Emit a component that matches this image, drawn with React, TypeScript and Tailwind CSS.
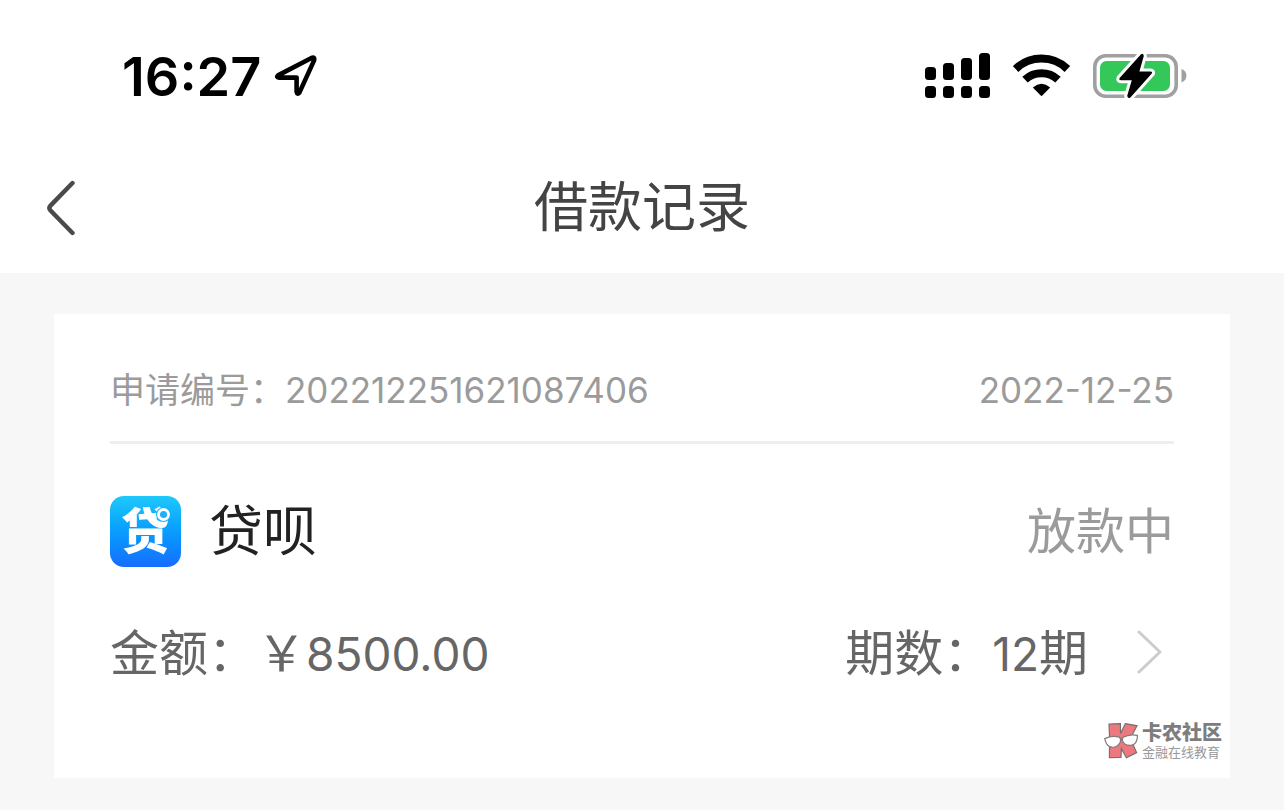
import React from "react";

function LocationArrow() {
  return (
    <svg className="h-11 w-11" viewBox="0 0 44 44" fill="none" aria-hidden="true">
      <path
        d="M5 21.4 38 4.2Q42.2 2.4 41 6.6L26.4 38.6Q24.2 41 23.6 37.8V23.6H6.2Q3 23.2 5 21.4Z"
        stroke="#000"
        strokeWidth="4.6"
        strokeLinejoin="round"
      />
    </svg>
  );
}

function SignalBars() {
  return (
    <svg className="h-[46px] w-[66px]" viewBox="0 0 66 46" aria-hidden="true">
      <rect x="0" y="14" width="11" height="13" rx="3.5" />
      <rect x="18" y="10" width="11" height="17" rx="3.5" />
      <rect x="36" y="5" width="11" height="22" rx="3.5" />
      <rect x="54" y="0" width="11" height="27" rx="3.5" />
      <rect x="0" y="33" width="11" height="12" rx="3.5" />
      <rect x="18" y="33" width="11" height="12" rx="3.5" />
      <rect x="36" y="33" width="11" height="12" rx="3.5" />
      <rect x="54" y="33" width="11" height="12" rx="3.5" />
    </svg>
  );
}

function Wifi() {
  return (
    <svg className="h-11 w-[58px]" viewBox="0 0 58 44" fill="none" aria-hidden="true">
      <path d="M2.6 15A37.5 37.5 0 0 1 54.4 15" stroke="#000" strokeWidth="8" />
      <path d="M12 25.6A24.5 24.5 0 0 1 45 25.6" stroke="#000" strokeWidth="8" />
      <path d="M19.8 33.4Q28.5 26 37.2 33.4L29.3 41.6Q28.5 42.2 27.7 41.6Z" fill="#000" />
    </svg>
  );
}

function Battery() {
  return (
    <svg className="h-[46px] w-24" viewBox="0 0 96 46" fill="none" aria-hidden="true">
      <rect x="1.8" y="2.8" width="81.4" height="40.4" rx="11" stroke="#a0a0a0" strokeWidth="3.6" />
      <rect x="7" y="8" width="70" height="30" rx="6.5" fill="#34c759" />
      <path d="M88.5 16Q93.4 17.5 93.4 22.5T88.5 29.5Z" fill="#a0a0a0" />
      <path
        d="M48 1.2 26.6 25Q25.6 27.2 28 27.2H38.8L34.2 42.8Q34.6 46 37.4 44.4L58.8 20.6Q59.8 18.6 57.4 18.6H46.4L50.8 3Q50.4 0 48 1.2Z"
        fill="#000"
        stroke="#fff"
        strokeWidth="6"
        paintOrder="stroke"
      />
    </svg>
  );
}

function StatusBar() {
  return (
    <div className="flex h-36 items-center justify-between pt-2 pr-[95px] pl-[122px]">
      <div className="flex items-center gap-3">
        <span className="pt-0.5 text-[54px] leading-[64px] font-semibold text-black">16:27</span>
        <LocationArrow />
      </div>
      <div className="flex items-center gap-[22px]">
        <SignalBars />
        <Wifi />
        <Battery />
      </div>
    </div>
  );
}

function NavBar() {
  return (
    <header className="grid h-[129px] grid-cols-[1fr_auto_1fr] items-center px-11 pb-0.5">
      <button type="button" aria-label="返回" className="w-8">
        <svg className="h-14 w-8" viewBox="0 0 32 56" fill="none">
          <path
            d="M28.5 3 6.5 25.6Q4.2 28 6.5 30.4L28.5 53"
            stroke="#4a4a4a"
            strokeWidth="4.4"
            strokeLinecap="round"
            strokeLinejoin="round"
          />
        </svg>
      </button>
      <h1 className="text-[54px] leading-[64px] text-[#444]">借款记录</h1>
    </header>
  );
}

function LenderLogo() {
  return (
    <div className="relative flex size-[71px] items-center justify-center rounded-[14px] bg-linear-to-b from-[#20c8fa] to-[#186cff]">
      <span className="text-[49px] leading-[71px] font-black text-white">贷</span>
      <svg className="absolute top-2 right-2 size-5" viewBox="0 0 20 20" fill="none" aria-hidden="true">
        <circle cx="10.5" cy="10.5" r="7.5" fill="#1eb0fb" />
        <circle cx="10.5" cy="10.5" r="5" stroke="#fff" strokeWidth="2.8" />
      </svg>
    </div>
  );
}

function CommunityMark() {
  return (
    <div className="absolute right-2 bottom-[18px] flex items-center gap-1">
      <svg className="h-9 w-[34px]" viewBox="0 0 34 36" aria-hidden="true">
        <path
          d="M5 1 16.4.6 16.6 10.6 21.4.6 33 2.8 26.4 15.6 32.6 29.6 22.4 34.8 17.4 25.6 17 34.4 5.4 34.6 5.6 15Z"
          fill="#ec7880"
          stroke="#77706f"
          strokeWidth="1.2"
        />
        <path
          d="M.8 15.6Q8 12.2 15.4 14.2 17.4 16 16.2 19.2 13.4 24.6 8 24.2 2 23.6.8 15.6Z"
          fill="#fff"
          stroke="#807b7a"
          strokeWidth="1.2"
        />
        <path
          d="M18.6 14.6Q25.6 10.6 33.4 12.4 33.6 21 27 22.4 20.2 23 18.4 17.4Z"
          fill="#fff"
          stroke="#807b7a"
          strokeWidth="1.2"
        />
        <path d="M16.4 17Q17.4 15.4 18.6 16.6" fill="none" stroke="#807b7a" strokeWidth="1.2" />
      </svg>
      <div className="flex flex-col">
        <span className="text-[20px] leading-[22px] font-black text-[#7d7d7d]">卡农社区</span>
        <span className="text-[13px] leading-4 text-[#999]">金融在线教育</span>
      </div>
    </div>
  );
}

function LoanCard() {
  return (
    <article className="relative bg-white px-14 pt-[34px] pb-[90px]">
      <div className="flex items-center justify-between border-b-3 border-[#eee] pt-4 pb-[25px] text-[35px] leading-[52px] text-[#9b9b9b]">
        <p>申请编号：202212251621087406</p>
        <time dateTime="2022-12-25">2022-12-25</time>
      </div>
      <div className="flex items-center justify-between pt-[52px]">
        <div className="flex items-center gap-7">
          <LenderLogo />
          <h2 className="text-[54px] leading-[71px] text-[#222]">贷呗</h2>
        </div>
        <p className="text-[49px] leading-[71px] text-[#9b9b9b]">放款中</p>
      </div>
      <div className="flex items-center justify-between pt-[53px] text-[49px] leading-[68px] text-[#666]">
        <p>
          金额：￥<span className="text-[46px]">8500.00</span>
        </p>
        <a href="#detail" aria-label="查看详情" className="flex items-center gap-12 pr-3">
          <span>
            期数：<span className="text-[46px]">12</span>期
          </span>
          <svg className="mb-1 h-11 w-[26px]" viewBox="0 0 26 44" fill="none" aria-hidden="true">
            <path
              d="M3 2 24 22 3 42"
              stroke="#ccc"
              strokeWidth="3"
              strokeLinecap="round"
              strokeLinejoin="round"
            />
          </svg>
        </a>
      </div>
      <CommunityMark />
    </article>
  );
}

export default function App() {
  return (
    <div className="flex min-h-screen flex-col bg-[#f7f7f7] font-[Inter,'Noto_Sans_CJK_SC',sans-serif]">
      <div className="bg-white">
        <StatusBar />
        <NavBar />
      </div>
      <main className="px-[54px] pt-[41px] pb-8">
        <LoanCard />
      </main>
    </div>
  );
}
